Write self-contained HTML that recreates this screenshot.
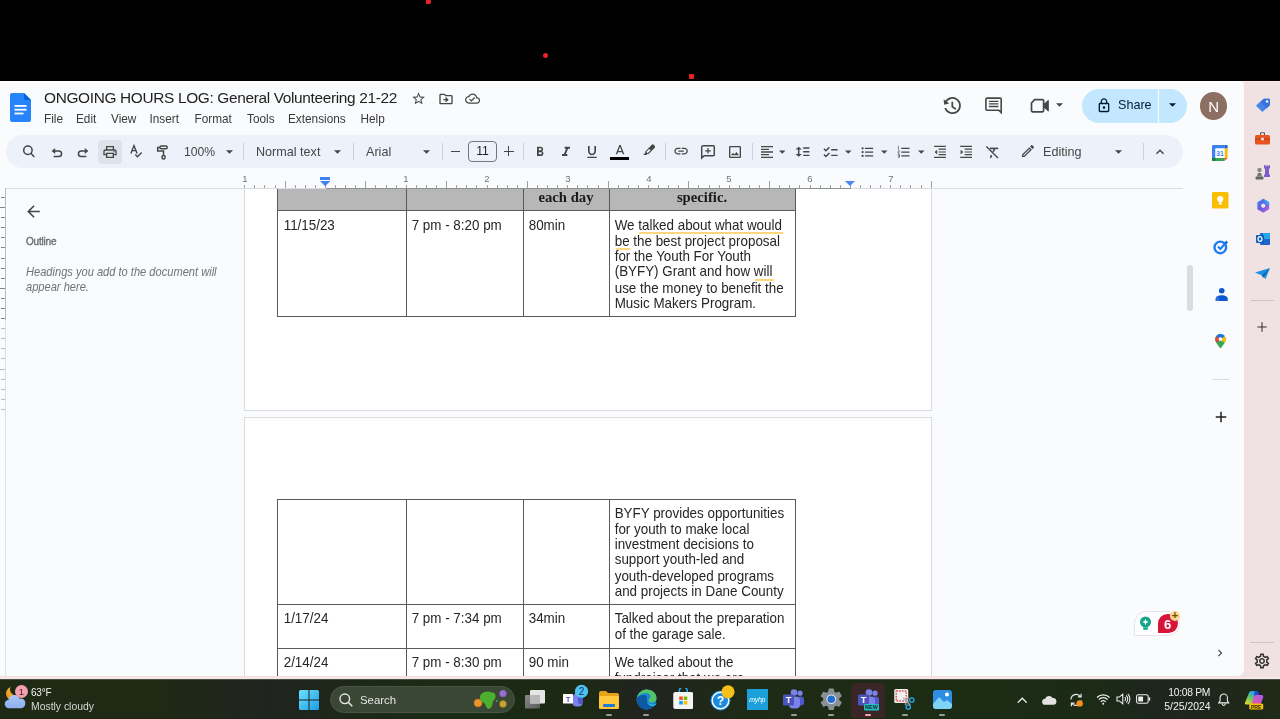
<!DOCTYPE html>
<html><head><meta charset="utf-8">
<style>
*{margin:0;padding:0;box-sizing:border-box}
html,body{width:1280px;height:719px;overflow:hidden;background:#000;font-family:"Liberation Sans",sans-serif;position:relative}
.a{position:absolute}
svg.i{position:absolute;fill:#444746}
.t{position:absolute;white-space:nowrap;line-height:1}
.cell{position:absolute;white-space:nowrap;font-size:13.4px;line-height:14.136px;color:#262626;transform:scaleY(1.1);transform-origin:0 0}
.t{will-change:transform}
</style></head><body>
<!-- top black with red dots -->
<div class="a" style="left:426px;top:0;width:5px;height:4px;background:#ee2222;border-radius:0 1px 2px 1px"></div>
<div class="a" style="left:543px;top:53px;width:5px;height:5px;background:#ee2222;border-radius:50%"></div>
<div class="a" style="left:689px;top:74px;width:5px;height:5px;background:#ee2222;border-radius:1px"></div>

<!-- browser frame pink -->
<div class="a" style="left:0;top:81px;width:1280px;height:598px;background:#f0e2e2"></div>
<!-- docs app -->
<div id="app" class="a" style="left:0;top:81px;width:1244px;height:595px;background:#f9fbfd;border-radius:0 3px 7px 0;overflow:hidden">
</div>

<!-- ===== HEADER ===== -->
<div class="a" style="left:0;top:81px;width:1241px;height:1px;background:#fff"></div><div class="a" style="left:1241px;top:81px;width:39px;height:1px;background:#fde9e9"></div><div class="a" style="left:0;top:677px;width:1280px;height:2px;background:#f8e6e6"></div><div class="a" style="left:0;top:679px;width:1280px;height:1px;background:#15240f"></div>
<!-- docs logo -->
<svg class="a" style="left:10px;top:93px" width="21" height="29" viewBox="0 0 21 29">
<path d="M2 0h12l7 7v20a2 2 0 0 1-2 2H2a2 2 0 0 1-2-2V2a2 2 0 0 1 2-2z" fill="#2684fc"/>
<path d="M14 0l7 7h-5.2a1.8 1.8 0 0 1-1.8-1.8z" fill="#0066da"/>
<rect x="4.5" y="12" width="12" height="1.8" fill="#fff"/>
<rect x="4.5" y="15.8" width="12" height="1.8" fill="#fff"/>
<rect x="4.5" y="19.6" width="9" height="1.8" fill="#fff"/>
</svg>
<div class="t" style="left:43.5px;top:90px;font-size:15.4px;color:#1f1f1f;letter-spacing:-0.33px">ONGOING HOURS LOG: General Volunteering 21-22</div>
<!-- star, move, cloud -->
<svg class="i" style="left:411px;top:90.7px" width="15.2" height="15.2" viewBox="0 0 24 24"><path d="M22 9.24l-7.19-.62L12 2 9.19 8.63 2 9.24l5.46 4.73L5.82 21 12 17.270 18.18 21l-1.63-7.03L22 9.24zM12 15.4l-3.760 2.27 1-4.28-3.32-2.88 4.38-.38L12 6.1l1.71 4.04 4.38.38-3.32 2.880 1 4.28L12 15.4z"/></svg>
<svg class="i" style="left:437.7px;top:91.1px" width="16" height="16" viewBox="0 0 24 24"><path d="M20 6h-8l-2-2H4c-1.1 0-1.99.9-1.99 2L2 18c0 1.1.9 2 2 2h16c1.1 0 2-.9 2-2V8c0-1.1-.9-2-2-2zm0 12H4V6h5.17l2 2H20v10zm-7.84-6H8v2h4.160l-1.59 1.59L11.99 17 16 13.01 11.99 9l-1.41 1.41L12.16 12z"/></svg>
<svg class="i" style="left:465.1px;top:91.3px" width="15.2" height="15.2" viewBox="0 0 24 24"><path d="M19.35 10.04C18.67 6.59 15.64 4 12 4 9.11 4 6.6 5.64 5.35 8.04 2.34 8.36 0 10.91 0 14c0 3.31 2.69 6 6 6h13c2.76 0 5-2.24 5-5 0-2.640-2.05-4.78-4.65-4.96zM19 18H6c-2.21 0-4-1.79-4-4 0-2.05 1.53-3.76 3.56-3.97l1.07-.11.5-.95C8.08 7.14 9.94 6 12 6c2.62 0 4.88 1.86 5.39 4.43l.3 1.5 1.53.11c1.56.1 2.78 1.41 2.78 2.96 0 1.65-1.35 3-3 3zm-9-3.82l-2.09-2.09L6.5 13.5 10 17l6.01-6.01-1.41-1.41z"/></svg>
<!-- menu -->
<div class="t" style="top:112.8px;font-size:11.8px;color:#3a3a3a;transform:scaleY(1.1);transform-origin:0 0">
<span class="a" style="left:44px">File</span><span class="a" style="left:76px">Edit</span><span class="a" style="left:111px">View</span><span class="a" style="left:149.5px">Insert</span><span class="a" style="left:194.5px">Format</span><span class="a" style="left:247px">Tools</span><span class="a" style="left:288px">Extensions</span><span class="a" style="left:360.5px">Help</span>
</div>
<!-- right header -->
<svg class="a" style="left:940px;top:94.7px" width="24" height="22" viewBox="940 94 24 22" fill="none" stroke="#444746" stroke-width="1.7">
<path d="M945.6 101.2A7.6 7.6 0 1 1 945.2 107"/>
<path d="M952.3 100.8V105.6L955.8 108.2"/>
<path d="M943.6 98.3L944.2 103.8 949.2 102.4z" fill="#444746" stroke="none"/>
</svg>
<svg class="a" style="left:984px;top:96px" width="20" height="19" viewBox="984 96 20 19" fill="none" stroke="#444746" stroke-width="1.6">
<path d="M987.1 98.1H1000a1.2 1.2 0 0 1 1.2 1.2V112.6L998.8 110.2H987.1a1.2 1.2 0 0 1-1.2-1.2V99.3a1.2 1.2 0 0 1 1.2-1.2z"/>
<path d="M988.9 101.3H998.4M988.9 103.9H998.4M988.9 106.5H998.4" stroke-width="1.3"/>
</svg>
<svg class="a" style="left:1029px;top:97px" width="22" height="17" viewBox="1029 97 22 17" fill="none" stroke="#444746" stroke-width="1.7">
<path d="M1034.6 99.7H1042.4a1.2 1.2 0 0 1 1.2 1.2V110.6a1.2 1.2 0 0 1-1.2 1.2H1032.7a1.2 1.2 0 0 1-1.2-1.2V103z"/>
<path d="M1043.6 104.6L1048.3 100.4V111L1043.6 106.8z" fill="#444746" stroke-width="1"/>
</svg>
<svg class="i" style="left:1056px;top:103.3px" width="7" height="4" viewBox="0 0 10 5"><path d="M0 0l5 5 5-5z"/></svg>
<!-- share -->
<div class="a" style="left:1082px;top:89px;width:104.5px;height:33.5px;background:#c2e7ff;border-radius:17px"></div>
<div class="a" style="left:1158px;top:89px;width:1px;height:33.5px;background:#f9fbfd"></div>
<svg class="a" style="left:1095.5px;top:97px" width="16" height="17" viewBox="0 0 24 24" fill="#001d35"><path d="M18 8h-1V6c0-2.76-2.24-5-5-5S7 3.24 7 6v2H6c-1.1 0-2 .9-2 2v10c0 1.1.9 2 2 2h12c1.1 0 2-.9 2-2V10c0-1.1-.9-2-2-2zM9 6c0-1.66 1.34-3 3-3s3 1.34 3 3v2H9V6zm9 14H6V10h12v10zm-6-3c1.1 0 2-.9 2-2s-.9-2-2-2-2 .9-2 2 .9 2 2 2z"/></svg>
<div class="t" style="left:1118px;top:99px;font-size:12.6px;color:#001d35">Share</div>
<svg class="a" style="left:1168.5px;top:103px" width="7" height="4" viewBox="0 0 10 5" fill="#001d35"><path d="M0 0l5 5 5-5z"/></svg>
<!-- avatar -->
<div class="a" style="left:1199.5px;top:92px;width:27.5px;height:27.5px;border-radius:50%;background:#8d6e63"></div>
<div class="t" style="left:1199.5px;width:27.5px;text-align:center;top:99px;font-size:15px;color:#fff">N</div>
<!-- ===== TOOLBAR ===== -->
<div class="a" style="left:5.5px;top:134.5px;width:1177.5px;height:33.5px;background:#edf2fa;border-radius:17px"></div>
<div class="a" style="left:98px;top:139.5px;width:24px;height:24.5px;background:#dde3ea;border-radius:4px"></div>
<!-- search -->
<svg class="a" style="left:20px;top:142px" width="17" height="17" viewBox="20 142 17 17" fill="none" stroke="#444746" stroke-width="1.5"><circle cx="27.9" cy="150.2" r="4.2"/><path d="M30.9 153.3L34.3 156.9"/></svg>
<!-- undo -->
<svg class="a" style="left:51.2px;top:147px" width="12" height="11" viewBox="0 0 12 11"><path d="M3.5 4H7.8a2.75 2.75 0 0 1 0 5.5H2.6" stroke="#444746" stroke-width="1.5" fill="none"/><path d="M0.6 4L4.2 0.9V7.1z" fill="#444746"/></svg>
<!-- redo -->
<svg class="a" style="left:77px;top:147px;transform:scaleX(-1)" width="12" height="11" viewBox="0 0 12 11"><path d="M3.5 4H7.8a2.75 2.75 0 0 1 0 5.5H2.6" stroke="#444746" stroke-width="1.5" fill="none"/><path d="M0.6 4L4.2 0.9V7.1z" fill="#444746"/></svg>
<!-- print -->
<svg class="i" style="left:101.5px;top:144px" width="16" height="16" viewBox="0 0 24 24"><path d="M19 8h-1V3H6v5H5c-1.66 0-3 1.34-3 3v6h4v4h12v-4h4v-6c0-1.66-1.34-3-3-3zM8 5h8v3H8V5zm8 12v2H8v-4h8v2zm2-2v-2H6v2H4v-4c0-.55.45-1 1-1h14c.55 0 1 .45 1 1v4h-2z"/><circle cx="18" cy="11.5" r="1"/></svg>
<!-- spellcheck -->
<svg class="a" style="left:128px;top:143px" width="16" height="16" viewBox="128 143 16 16" fill="none" stroke="#444746" stroke-width="1.4"><path d="M130.9 153.5L134 145.6 137.1 153.5M132.2 150.6H135.8M135.3 154.6L137.4 156.7 141.7 152.4"/></svg>
<!-- paint format -->
<svg class="a" style="left:155px;top:144px" width="15" height="17" viewBox="155 144 15 17" fill="none" stroke="#444746" stroke-width="1.5"><rect x="159.9" y="146.1" width="7.3" height="2.7" rx="1.3"/><path d="M159.6 147.4H157.7V150.9H163.5V155.2"/><rect x="162" y="155.5" width="3.1" height="3.6" rx="1.5"/></svg>
<div class="t" style="left:183.5px;top:146px;font-size:12.2px;color:#444746">100%</div>
<svg class="i" style="left:225.5px;top:150px" width="7" height="4" viewBox="0 0 10 5"><path d="M0 0l5 5 5-5z"/></svg>
<div class="a" style="left:243px;top:143px;width:1px;height:17px;background:#cdd1d6"></div>
<div class="t" style="left:256px;top:146px;font-size:12.6px;color:#444746">Normal text</div>
<svg class="i" style="left:333.5px;top:150px" width="7" height="4" viewBox="0 0 10 5"><path d="M0 0l5 5 5-5z"/></svg>
<div class="a" style="left:352.5px;top:143px;width:1px;height:17px;background:#cdd1d6"></div>
<div class="t" style="left:366px;top:146px;font-size:12.6px;color:#444746">Arial</div>
<svg class="i" style="left:422.5px;top:150px" width="7" height="4" viewBox="0 0 10 5"><path d="M0 0l5 5 5-5z"/></svg>
<div class="a" style="left:441.5px;top:143px;width:1px;height:17px;background:#cdd1d6"></div>
<div class="a" style="left:450.5px;top:150.7px;width:9px;height:1.4px;background:#444746"></div>
<div class="a" style="left:468px;top:141px;width:29px;height:21px;border:1px solid #747775;border-radius:4px"></div>
<div class="t" style="left:468px;width:29px;text-align:center;top:145.4px;font-size:12.2px;color:#1f1f1f">11</div>
<div class="a" style="left:504px;top:150.7px;width:9.5px;height:1.4px;background:#444746"></div>
<div class="a" style="left:508px;top:146.3px;width:1.4px;height:9.6px;background:#444746"></div>
<div class="a" style="left:523px;top:143px;width:1px;height:17px;background:#cdd1d6"></div>
<!-- B I U A -->
<svg class="i" style="left:532px;top:144px;transform:scaleX(0.9)" width="16" height="16" viewBox="0 0 24 24"><path d="M15.6 10.79c.97-.67 1.65-1.77 1.65-2.79 0-2.26-1.75-4-4-4H7v14h7.04c2.09 0 3.71-1.7 3.71-3.79 0-1.52-.86-2.82-2.15-3.42zM10 6.5h3c.83 0 1.5.67 1.5 1.5s-.67 1.5-1.5 1.5h-3v-3zm3.5 9H10v-3h3.5c.83 0 1.5.67 1.5 1.5s-.67 1.5-1.5 1.5z"/></svg>
<svg class="i" style="left:557.5px;top:143.6px" width="16" height="16" viewBox="0 0 24 24"><path d="M10 4v3h2.21l-3.42 8H6v3h8v-3h-2.21l3.42-8H18V4z"/></svg>
<svg class="i" style="left:584px;top:144px" width="16" height="16" viewBox="0 0 24 24"><path d="M12 17c3.31 0 6-2.69 6-6V3h-2.5v8c0 1.93-1.57 3.5-3.5 3.5S8.5 12.93 8.5 11V3H6v8c0 3.31 2.69 6 6 6zm-7 2v2h14v-2H5z"/></svg>
<svg class="i" style="left:611.5px;top:142.5px" width="16" height="16" viewBox="0 0 24 24"><path d="M11 3L5.500 17h2.25l1.12-3h6.25l1.12 3h2.25L13 3h-2zm-1.38 9L12 5.67 14.380 12H9.62z"/></svg>
<div class="a" style="left:610px;top:156.5px;width:19px;height:3px;background:#000"></div>
<!-- highlighter -->
<svg class="a" style="left:642.5px;top:143.5px" width="12.5" height="11" viewBox="0 0 12.5 11">
<path d="M9 0.5a1 1 0 0 1 1.4 0l1.6 1.6a1 1 0 0 1 0 1.4L5.6 9.9H4.4L3.3 11H0.2L2.3 8.8V7.6z" fill="#444746"/>
<path d="M6.2 4.9L7.6 6.3 4.7 9.2 3.3 7.8z" fill="#edf2fa"/>
</svg>
<div class="a" style="left:665px;top:143px;width:1px;height:17px;background:#cdd1d6"></div>
<svg class="i" style="left:673.2px;top:142.8px" width="16.2" height="16.2" viewBox="0 0 24 24"><path d="M3.9 12c0-1.71 1.39-3.1 3.1-3.1h4V7H7c-2.76 0-5 2.24-5 5s2.24 5 5 5h4v-1.9H7c-1.71 0-3.1-1.39-3.1-3.1zM8 13h8v-2H8v2zm9-6h-4v1.9h4c1.71 0 3.1 1.39 3.1 3.1s-1.39 3.1-3.1 3.1h-4V17h4c2.76 0 5-2.24 5-5s-2.24-5-5-5z"/></svg>
<svg class="a" style="left:699px;top:143px" width="18" height="18" viewBox="699 143 18 18" fill="none" stroke="#444746" stroke-width="1.45"><path d="M702.6 145.7H713.3a1 1 0 0 1 1 1V154.8a1 1 0 0 1-1 1H704.1L701.7 158V146.7a1 1 0 0 1 1-1z"/><path d="M708 148.1V153.6M705.2 150.85H710.8" stroke-width="1.25"/></svg>
<svg class="i" style="left:726.5px;top:143.6px" width="16" height="16" viewBox="0 0 24 24"><path d="M19 5v14H5V5h14m0-2H5c-1.1 0-2 .9-2 2v14c0 1.1.9 2 2 2h14c1.1 0 2-.9 2-2V5c0-1.1-.9-2-2-2zm-4.86 8.86l-3 3.87L9 13.140 6 17h12l-3.86-5.14z"/></svg>
<div class="a" style="left:752px;top:143px;width:1px;height:17px;background:#cdd1d6"></div>
<svg class="i" style="left:758.5px;top:144px" width="16" height="16" viewBox="0 0 24 24"><path d="M15 15H3v2h12v-2zm0-8H3v2h12V7zM3 13h18v-2H3v2zm0 8h18v-2H3v2zM3 3v2h18V3H3z"/></svg>
<svg class="i" style="left:778.5px;top:150px" width="6.5" height="4" viewBox="0 0 10 5"><path d="M0 0l5 5 5-5z"/></svg>
<svg class="a" style="left:794px;top:145px" width="17" height="13" viewBox="794 145 17 13"><path d="M795.5 149.6L798.7 146.8 801.9 149.6zM795.5 153.9L798.7 156.7 801.9 153.9z" fill="#444746"/><path d="M798.7 149V154.5" stroke="#444746" stroke-width="1.5"/><path d="M803.2 148H809.4M803.2 151.7H809.4M803.2 155.4H809.4" stroke="#444746" stroke-width="1.4"/></svg>
<svg class="i" style="left:822px;top:144px" width="17" height="17" viewBox="0 0 24 24"><path d="M22 7h-9v2h9V7zm0 8h-9v2h9v-2zM5.54 11L2 7.460l1.41-1.41 2.12 2.12 4.24-4.24 1.41 1.41L5.54 11zm0 8L2 15.46l1.41-1.41 2.12 2.12 4.24-4.24 1.41 1.41L5.54 19z"/></svg>
<svg class="i" style="left:845px;top:150px" width="6.5" height="4" viewBox="0 0 10 5"><path d="M0 0l5 5 5-5z"/></svg>
<svg class="a" style="left:859px;top:144px" width="16" height="16" viewBox="859 144 16 16"><g fill="#444746"><circle cx="862.6" cy="148.3" r="1.15"/><circle cx="862.6" cy="152.1" r="1.15"/><circle cx="862.6" cy="155.9" r="1.15"/></g><path d="M865 148.3H873.2M865 152.1H873.2M865 155.9H873.2" stroke="#444746" stroke-width="1.3"/></svg>
<svg class="i" style="left:881px;top:150px" width="6.5" height="4" viewBox="0 0 10 5"><path d="M0 0l5 5 5-5z"/></svg>
<svg class="a" style="left:896px;top:144px" width="16" height="16" viewBox="896 144 16 16"><path d="M901.3 148.3H909.5M901.3 152.1H909.5M901.3 155.9H909.5" stroke="#444746" stroke-width="1.3"/><path d="M898.4 146.2V149.6M897.8 150.9H899.5L897.8 153.1H899.6M897.8 154.6H899.5V157.2H897.8M897.9 155.9H899.4" stroke="#444746" stroke-width="0.7" fill="none"/></svg>
<svg class="i" style="left:918px;top:150px" width="6.5" height="4" viewBox="0 0 10 5"><path d="M0 0l5 5 5-5z"/></svg>
<svg class="a" style="left:932px;top:144px" width="16" height="16" viewBox="932 144 16 16"><path d="M934.1 146.4H945.9M938.6 149.2H945.9M938.6 152H945.9M938.6 154.7H945.9M934.1 157.4H945.9" stroke="#444746" stroke-width="1.2"/><path d="M937.2 149.8V154.4L934.6 152.1z" fill="#444746"/></svg>
<svg class="a" style="left:958px;top:144px" width="16" height="16" viewBox="958 144 16 16"><path d="M960.2 146.4H972M964.7 149.2H972M964.7 152H972M964.7 154.7H972M960.2 157.4H972" stroke="#444746" stroke-width="1.2"/><path d="M960.6 149.8V154.4L963.2 152.1z" fill="#444746"/></svg>
<svg class="a" style="left:984px;top:144px" width="16" height="16" viewBox="984 144 16 16"><path d="M986.4 146.6L998 157.9" stroke="#444746" stroke-width="1.4"/><path d="M990 148.4H998.2" stroke="#444746" stroke-width="1.6"/><path d="M994.6 148.6L993.2 151.9M991.6 155.1L990.4 157.9" stroke="#444746" stroke-width="1.6"/></svg>
<svg class="i" style="left:1020px;top:143px" width="16" height="16" viewBox="0 0 24 24"><path d="M3 17.25V21h3.75L17.81 9.94l-3.75-3.75L3 17.25zM5.92 19H5v-.92l9.06-9.06.92.92L5.92 19zM20.71 5.63l-2.34-2.34c-.2-.2-.45-.29-.71-.29s-.51.1-.7.29l-1.83 1.83 3.75 3.75 1.83-1.83c.39-.39.39-1.02 0-1.41z"/></svg>
<div class="t" style="left:1043px;top:146px;font-size:12.6px;color:#444746">Editing</div>
<svg class="i" style="left:1115px;top:150px" width="7" height="4" viewBox="0 0 10 5"><path d="M0 0l5 5 5-5z"/></svg>
<div class="a" style="left:1143px;top:143px;width:1px;height:17px;background:#cdd1d6"></div>
<svg class="i" style="left:1152px;top:144px" width="16" height="16" viewBox="0 0 24 24"><path d="M12 8l-6 6 1.41 1.41L12 10.83l4.59 4.58L18 14z"/></svg>
<!-- ===== RULER ===== -->
<div class="a" style="left:244.25px;top:184.5px;width:1px;height:3.5px;background:#9aa0a6"></div>
<div class="a" style="left:254.34px;top:184.5px;width:1px;height:3.5px;background:#9aa0a6"></div>
<div class="a" style="left:264.44px;top:184.5px;width:1px;height:3.5px;background:#9aa0a6"></div>
<div class="a" style="left:274.53px;top:184.5px;width:1px;height:3.5px;background:#9aa0a6"></div>
<div class="a" style="left:284.62px;top:181px;width:1px;height:7px;background:#9aa0a6"></div>
<div class="a" style="left:294.72px;top:184.5px;width:1px;height:3.5px;background:#9aa0a6"></div>
<div class="a" style="left:304.81px;top:184.5px;width:1px;height:3.5px;background:#9aa0a6"></div>
<div class="a" style="left:314.91px;top:184.5px;width:1px;height:3.5px;background:#9aa0a6"></div>
<div class="a" style="left:325.00px;top:184.5px;width:1px;height:3.5px;background:#9aa0a6"></div>
<div class="a" style="left:335.09px;top:184.5px;width:1px;height:3.5px;background:#9aa0a6"></div>
<div class="a" style="left:345.19px;top:184.5px;width:1px;height:3.5px;background:#9aa0a6"></div>
<div class="a" style="left:355.28px;top:184.5px;width:1px;height:3.5px;background:#9aa0a6"></div>
<div class="a" style="left:365.38px;top:181px;width:1px;height:7px;background:#9aa0a6"></div>
<div class="a" style="left:375.47px;top:184.5px;width:1px;height:3.5px;background:#9aa0a6"></div>
<div class="a" style="left:385.56px;top:184.5px;width:1px;height:3.5px;background:#9aa0a6"></div>
<div class="a" style="left:395.66px;top:184.5px;width:1px;height:3.5px;background:#9aa0a6"></div>
<div class="a" style="left:405.75px;top:184.5px;width:1px;height:3.5px;background:#9aa0a6"></div>
<div class="a" style="left:415.84px;top:184.5px;width:1px;height:3.5px;background:#9aa0a6"></div>
<div class="a" style="left:425.94px;top:184.5px;width:1px;height:3.5px;background:#9aa0a6"></div>
<div class="a" style="left:436.03px;top:184.5px;width:1px;height:3.5px;background:#9aa0a6"></div>
<div class="a" style="left:446.12px;top:181px;width:1px;height:7px;background:#9aa0a6"></div>
<div class="a" style="left:456.22px;top:184.5px;width:1px;height:3.5px;background:#9aa0a6"></div>
<div class="a" style="left:466.31px;top:184.5px;width:1px;height:3.5px;background:#9aa0a6"></div>
<div class="a" style="left:476.41px;top:184.5px;width:1px;height:3.5px;background:#9aa0a6"></div>
<div class="a" style="left:486.50px;top:184.5px;width:1px;height:3.5px;background:#9aa0a6"></div>
<div class="a" style="left:496.59px;top:184.5px;width:1px;height:3.5px;background:#9aa0a6"></div>
<div class="a" style="left:506.69px;top:184.5px;width:1px;height:3.5px;background:#9aa0a6"></div>
<div class="a" style="left:516.78px;top:184.5px;width:1px;height:3.5px;background:#9aa0a6"></div>
<div class="a" style="left:526.88px;top:181px;width:1px;height:7px;background:#9aa0a6"></div>
<div class="a" style="left:536.97px;top:184.5px;width:1px;height:3.5px;background:#9aa0a6"></div>
<div class="a" style="left:547.06px;top:184.5px;width:1px;height:3.5px;background:#9aa0a6"></div>
<div class="a" style="left:557.16px;top:184.5px;width:1px;height:3.5px;background:#9aa0a6"></div>
<div class="a" style="left:567.25px;top:184.5px;width:1px;height:3.5px;background:#9aa0a6"></div>
<div class="a" style="left:577.34px;top:184.5px;width:1px;height:3.5px;background:#9aa0a6"></div>
<div class="a" style="left:587.44px;top:184.5px;width:1px;height:3.5px;background:#9aa0a6"></div>
<div class="a" style="left:597.53px;top:184.5px;width:1px;height:3.5px;background:#9aa0a6"></div>
<div class="a" style="left:607.62px;top:181px;width:1px;height:7px;background:#9aa0a6"></div>
<div class="a" style="left:617.72px;top:184.5px;width:1px;height:3.5px;background:#9aa0a6"></div>
<div class="a" style="left:627.81px;top:184.5px;width:1px;height:3.5px;background:#9aa0a6"></div>
<div class="a" style="left:637.91px;top:184.5px;width:1px;height:3.5px;background:#9aa0a6"></div>
<div class="a" style="left:648.00px;top:184.5px;width:1px;height:3.5px;background:#9aa0a6"></div>
<div class="a" style="left:658.09px;top:184.5px;width:1px;height:3.5px;background:#9aa0a6"></div>
<div class="a" style="left:668.19px;top:184.5px;width:1px;height:3.5px;background:#9aa0a6"></div>
<div class="a" style="left:678.28px;top:184.5px;width:1px;height:3.5px;background:#9aa0a6"></div>
<div class="a" style="left:688.38px;top:181px;width:1px;height:7px;background:#9aa0a6"></div>
<div class="a" style="left:698.47px;top:184.5px;width:1px;height:3.5px;background:#9aa0a6"></div>
<div class="a" style="left:708.56px;top:184.5px;width:1px;height:3.5px;background:#9aa0a6"></div>
<div class="a" style="left:718.66px;top:184.5px;width:1px;height:3.5px;background:#9aa0a6"></div>
<div class="a" style="left:728.75px;top:184.5px;width:1px;height:3.5px;background:#9aa0a6"></div>
<div class="a" style="left:738.84px;top:184.5px;width:1px;height:3.5px;background:#9aa0a6"></div>
<div class="a" style="left:748.94px;top:184.5px;width:1px;height:3.5px;background:#9aa0a6"></div>
<div class="a" style="left:759.03px;top:184.5px;width:1px;height:3.5px;background:#9aa0a6"></div>
<div class="a" style="left:769.12px;top:181px;width:1px;height:7px;background:#9aa0a6"></div>
<div class="a" style="left:779.22px;top:184.5px;width:1px;height:3.5px;background:#9aa0a6"></div>
<div class="a" style="left:789.31px;top:184.5px;width:1px;height:3.5px;background:#9aa0a6"></div>
<div class="a" style="left:799.41px;top:184.5px;width:1px;height:3.5px;background:#9aa0a6"></div>
<div class="a" style="left:809.50px;top:184.5px;width:1px;height:3.5px;background:#9aa0a6"></div>
<div class="a" style="left:819.59px;top:184.5px;width:1px;height:3.5px;background:#9aa0a6"></div>
<div class="a" style="left:829.69px;top:184.5px;width:1px;height:3.5px;background:#9aa0a6"></div>
<div class="a" style="left:839.78px;top:184.5px;width:1px;height:3.5px;background:#9aa0a6"></div>
<div class="a" style="left:849.88px;top:181px;width:1px;height:7px;background:#9aa0a6"></div>
<div class="a" style="left:859.97px;top:184.5px;width:1px;height:3.5px;background:#9aa0a6"></div>
<div class="a" style="left:870.06px;top:184.5px;width:1px;height:3.5px;background:#9aa0a6"></div>
<div class="a" style="left:880.16px;top:184.5px;width:1px;height:3.5px;background:#9aa0a6"></div>
<div class="a" style="left:890.25px;top:184.5px;width:1px;height:3.5px;background:#9aa0a6"></div>
<div class="a" style="left:900.34px;top:184.5px;width:1px;height:3.5px;background:#9aa0a6"></div>
<div class="a" style="left:910.44px;top:184.5px;width:1px;height:3.5px;background:#9aa0a6"></div>
<div class="a" style="left:920.53px;top:184.5px;width:1px;height:3.5px;background:#9aa0a6"></div>
<div class="a" style="left:930.62px;top:181px;width:1px;height:7px;background:#9aa0a6"></div>
<div class="t" style="left:234.75px;width:20px;text-align:center;top:174.3px;font-size:9.5px;color:#6f7479">1</div>
<div class="t" style="left:396.25px;width:20px;text-align:center;top:174.3px;font-size:9.5px;color:#6f7479">1</div>
<div class="t" style="left:477.00px;width:20px;text-align:center;top:174.3px;font-size:9.5px;color:#6f7479">2</div>
<div class="t" style="left:557.75px;width:20px;text-align:center;top:174.3px;font-size:9.5px;color:#6f7479">3</div>
<div class="t" style="left:638.50px;width:20px;text-align:center;top:174.3px;font-size:9.5px;color:#6f7479">4</div>
<div class="t" style="left:719.25px;width:20px;text-align:center;top:174.3px;font-size:9.5px;color:#6f7479">5</div>
<div class="t" style="left:800.00px;width:20px;text-align:center;top:174.3px;font-size:9.5px;color:#6f7479">6</div>
<div class="t" style="left:880.75px;width:20px;text-align:center;top:174.3px;font-size:9.5px;color:#6f7479">7</div>
<div class="a" style="left:5px;top:188px;width:1178px;height:1px;background:#dadce0"></div>
<!-- blue left indent marker -->
<div class="a" style="left:325.5px;top:188px;width:525px;height:1px;background:#8f9393"></div>
<div class="a" style="left:320.2px;top:177px;width:10.3px;height:3px;background:#3f82f0"></div>
<svg class="a" style="left:320.2px;top:180.8px" width="10.3" height="5.2" viewBox="0 0 10 5"><path d="M0 0h10L5 5z" fill="#3f82f0"/></svg>
<svg class="a" style="left:844.9px;top:181px" width="10" height="5" viewBox="0 0 10 5"><path d="M0 0h10L5 5z" fill="#4a86f0"/></svg>

<!-- ===== DOC SCROLL AREA ===== -->
<div class="a" style="left:0;top:189px;width:1183px;height:487px;overflow:hidden">
  <!-- page 1 -->
  <div class="a" style="left:244px;top:-200px;width:688px;height:422px;background:#fff;border:1px solid #dadce0"></div>
  <!-- page 2 -->
  <div class="a" style="left:244px;top:228px;width:688px;height:600px;background:#fff;border:1px solid #dadce0"></div>
  <!-- table 1 -->
  <div class="a" style="left:277px;top:-10px;width:519px;height:32px;background:#b7b7b7"></div>
  <div class="a" style="left:277px;top:-10px;width:1px;height:138px;background:#5a5a5a"></div>
  <div class="a" style="left:406px;top:-10px;width:1px;height:138px;background:#5a5a5a"></div>
  <div class="a" style="left:523px;top:-10px;width:1px;height:138px;background:#5a5a5a"></div>
  <div class="a" style="left:609px;top:-10px;width:1px;height:138px;background:#5a5a5a"></div>
  <div class="a" style="left:795px;top:-10px;width:1px;height:138px;background:#5a5a5a"></div>
  <div class="a" style="left:277px;top:21px;width:519px;height:1px;background:#5a5a5a"></div>
  <div class="a" style="left:277px;top:127px;width:519px;height:1px;background:#5a5a5a"></div>
  <div class="t" style="left:523px;width:86px;text-align:center;top:1px;font-size:14.7px;font-family:'Liberation Serif',serif;font-weight:bold;color:#1a1a1a">each day</div>
  <div class="t" style="left:609px;width:186px;text-align:center;top:1px;font-size:14.7px;font-family:'Liberation Serif',serif;font-weight:bold;color:#1a1a1a">specific.</div>
  <div class="cell" style="left:283.7px;top:29px">11/15/23</div>
  <div class="cell" style="left:411.7px;top:29px">7 pm - 8:20 pm</div>
  <div class="cell" style="left:528.7px;top:29px">80min</div>
  <div class="cell" style="left:614.7px;top:29px">We talked about what would<br>be the best project proposal<br>for the Youth For Youth<br>(BYFY) Grant and how will<br>use the money to benefit the<br>Music Makers Program.</div>
  <!-- yellow underlines -->
  <div class="a" style="left:638.5px;top:43px;width:144.5px;height:2px;background:#fdd87a"></div>
  <div class="a" style="left:615.5px;top:58.5px;width:14.5px;height:2px;background:#fdd87a"></div>
  <div class="a" style="left:755px;top:89.5px;width:19px;height:2px;background:#fdd87a"></div>

  <!-- table 2 -->
  <div class="a" style="left:277px;top:309.5px;width:519px;height:1px;background:#5a5a5a"></div>
  <div class="a" style="left:277px;top:415px;width:519px;height:1px;background:#5a5a5a"></div>
  <div class="a" style="left:277px;top:459px;width:519px;height:1px;background:#5a5a5a"></div>
  <div class="a" style="left:277px;top:309.5px;width:1px;height:300px;background:#5a5a5a"></div>
  <div class="a" style="left:406px;top:309.5px;width:1px;height:300px;background:#5a5a5a"></div>
  <div class="a" style="left:523px;top:309.5px;width:1px;height:300px;background:#5a5a5a"></div>
  <div class="a" style="left:609px;top:309.5px;width:1px;height:300px;background:#5a5a5a"></div>
  <div class="a" style="left:795px;top:309.5px;width:1px;height:300px;background:#5a5a5a"></div>
  <div class="cell" style="left:614.7px;top:317px">BYFY provides opportunities<br>for youth to make local<br>investment decisions to<br>support youth-led and<br>youth-developed programs<br>and projects in Dane County</div>
  <div class="cell" style="left:283.7px;top:421.5px">1/17/24</div>
  <div class="cell" style="left:411.7px;top:421.5px">7 pm - 7:34 pm</div>
  <div class="cell" style="left:528.7px;top:421.5px">34min</div>
  <div class="cell" style="left:614.7px;top:421.5px">Talked about the preparation<br>of the garage sale.</div>
  <div class="cell" style="left:283.7px;top:465.5px">2/14/24</div>
  <div class="cell" style="left:411.7px;top:465.5px">7 pm - 8:30 pm</div>
  <div class="cell" style="left:528.7px;top:465.5px">90 min</div>
  <div class="cell" style="left:614.7px;top:465.5px">We talked about the<br>fundraiser that we are</div>

  <!-- outline sidebar -->
  <div class="a" style="left:5px;top:-1px;width:239px;height:500px;background:#f9fbfd;border-top:1px solid #dadce0"></div>
</div>
<div class="a" style="left:1.3px;top:197.00px;width:3.7px;height:1px;background:#80868b"></div>
<div class="a" style="left:0px;top:207.09px;width:5px;height:1px;background:#80868b"></div>
<div class="a" style="left:1.3px;top:217.18px;width:3.7px;height:1px;background:#80868b"></div>
<div class="a" style="left:1.3px;top:227.27px;width:3.7px;height:1px;background:#80868b"></div>
<div class="a" style="left:1.3px;top:237.36px;width:3.7px;height:1px;background:#80868b"></div>
<div class="a" style="left:1.3px;top:247.45px;width:3.7px;height:1px;background:#80868b"></div>
<div class="a" style="left:1.3px;top:257.54px;width:3.7px;height:1px;background:#80868b"></div>
<div class="a" style="left:1.3px;top:267.63px;width:3.7px;height:1px;background:#80868b"></div>
<div class="a" style="left:1.3px;top:277.72px;width:3.7px;height:1px;background:#80868b"></div>
<div class="a" style="left:0px;top:287.81px;width:5px;height:1px;background:#80868b"></div>
<div class="a" style="left:1.3px;top:297.90px;width:3.7px;height:1px;background:#80868b"></div>
<div class="a" style="left:1.3px;top:307.99px;width:3.7px;height:1px;background:#80868b"></div>
<div class="a" style="left:1.3px;top:318.08px;width:3.7px;height:1px;background:#80868b"></div>
<div class="a" style="left:1.3px;top:328.17px;width:3.7px;height:1px;background:#b8bcc0"></div>
<div class="a" style="left:1.3px;top:338.26px;width:3.7px;height:1px;background:#b8bcc0"></div>
<div class="a" style="left:1.3px;top:348.35px;width:3.7px;height:1px;background:#b8bcc0"></div>
<div class="a" style="left:1.3px;top:358.44px;width:3.7px;height:1px;background:#b8bcc0"></div>
<div class="a" style="left:0px;top:368.53px;width:5px;height:1px;background:#b8bcc0"></div>
<div class="a" style="left:1.3px;top:378.62px;width:3.7px;height:1px;background:#b8bcc0"></div>
<div class="a" style="left:1.3px;top:388.71px;width:3.7px;height:1px;background:#b8bcc0"></div>
<div class="a" style="left:1.3px;top:398.80px;width:3.7px;height:1px;background:#b8bcc0"></div>
<div class="a" style="left:1.3px;top:408.89px;width:3.7px;height:1px;background:#b8bcc0"></div>
<div class="a" style="left:5px;top:188px;width:1px;height:132px;background:#b9bdc1"></div><div class="a" style="left:5px;top:320px;width:1px;height:356px;background:#dfe1e5"></div>
<svg class="a" style="left:24px;top:202px" width="19" height="19" viewBox="0 0 24 24" fill="#444746"><path d="M20 11H7.83l5.59-5.59L12 4l-8 8 8 8 1.41-1.41L7.83 13H20v-2z"/></svg>
<div class="t" style="left:25.5px;top:236.5px;font-size:10px;-webkit-text-stroke:0.35px #6a6e72;color:#6a6e72;letter-spacing:-0.2px">Outline</div>
<div class="t" style="left:25.5px;top:264.7px;font-size:11.1px;font-style:italic;color:#6f7377;line-height:12.5px;transform:scaleY(1.12);transform-origin:0 0">Headings you add to the document will<br>appear here.</div>
<!-- ===== RIGHT SIDE PANEL ===== -->
<!-- calendar -->
<svg class="a" style="left:1212.3px;top:145px" width="15.6" height="16" viewBox="0 0 15.6 16">
<path d="M1.2 0H12.5V3.5H3.5V12.9H0V1.2A1.2 1.2 0 0 1 1.2 0z" fill="#3b82f0"/>
<path d="M12.5 0h1.9a1.2 1.2 0 0 1 1.2 1.2V3.5H12.5z" fill="#1b5fd0"/>
<rect x="12.5" y="3.5" width="3.1" height="9.4" fill="#fbbc04"/>
<path d="M3.5 12.9H12.5V16H1.2A1.2 1.2 0 0 1 0 14.8V12.9z" fill="#34a853"/>
<path d="M0 12.9H3.5V16H1.2A1.2 1.2 0 0 1 0 14.8z" fill="#188038"/>
<path d="M12.5 12.9H15.6L12.5 16z" fill="#ea4335"/>
<rect x="3.5" y="3.5" width="9" height="9.4" fill="#fff"/>
<text x="8" y="11.3" font-size="6.8" text-anchor="middle" fill="#4285f4" font-family="Liberation Sans" font-weight="bold">31</text>
</svg>
<!-- keep -->
<svg class="a" style="left:1212px;top:192px" width="16.5" height="16.5" viewBox="0 0 16 16">
<rect width="16" height="16" rx="1.5" fill="#fbbc04"/>
<circle cx="8" cy="6.8" r="3" fill="#fff"/>
<rect x="6.6" y="10" width="2.8" height="2.2" fill="#fff"/>
</svg>
<!-- tasks -->
<svg class="a" style="left:1212px;top:239px" width="17" height="17" viewBox="1212 239 17 17">
<circle cx="1220.3" cy="247.4" r="5.8" fill="none" stroke="#1f7cf5" stroke-width="2.4"/>
<path d="M1217.9 246.6L1220.4 249 1224.6 244" fill="none" stroke="#1f7cf5" stroke-width="2.1"/>
<path d="M1226.2 240.6L1228 242.4 1226.2 244.2 1224.4 242.4z" fill="#1466d6"/>
</svg>
<!-- scroll thumb -->
<div class="a" style="left:1186.5px;top:265px;width:6.5px;height:46px;background:#dadce0;border-radius:4px"></div>
<!-- contacts -->
<svg class="a" style="left:1214.5px;top:287px" width="13.5" height="14.5" viewBox="0 0 14 14">
<circle cx="7" cy="3.3" r="2.9" fill="#0b57d0"/>
<path d="M0.8 14v-2.5C0.8 9.4 3.6 8 7 8s6.2 1.4 6.2 3.5V14z" fill="#0b57d0"/>
<path d="M0.8 14v-2.5C0.8 10 2 9 3.5 8.6L5 14z" fill="#2f6fe0"/>
</svg>
<!-- maps -->
<svg class="a" style="left:1215px;top:334px" width="11" height="14.5" viewBox="0 0 11 15">
<path d="M5.5 0A5.5 5.5 0 0 0 0 5.5C0 9 5.5 15 5.5 15S11 9 11 5.5A5.5 5.5 0 0 0 5.5 0z" fill="#34a853"/>
<path d="M5.5 0A5.5 5.5 0 0 0 1.2 2L5.5 6.3 9.8 2A5.5 5.5 0 0 0 5.5 0z" fill="#1a73e8"/>
<path d="M1.2 2A5.5 5.5 0 0 0 0 5.5c0 1 .4 2.2 1 3.3L5.5 6.3z" fill="#ea4335"/>
<path d="M9.8 2L5.5 6.3 10 9a7 7 0 0 0 1-3.5A5.5 5.5 0 0 0 9.8 2z" fill="#fbbc04"/>
<circle cx="5.5" cy="5.3" r="2" fill="#fff"/>
</svg>
<div class="a" style="left:1212px;top:379px;width:16.5px;height:1px;background:#dadce0"></div>
<svg class="a" style="left:1211.5px;top:407.5px" width="18" height="18" viewBox="0 0 24 24" fill="#1f1f1f"><path d="M19 13h-6v6h-2v-6H5v-2h6V5h2v6h6v2z"/></svg>
<!-- chevron -->
<svg class="a" style="left:1213px;top:645px" width="14" height="16" viewBox="0 0 24 24" fill="#444746"><path d="M10 6L8.59 7.41 13.17 12l-4.58 4.59L10 18l6-6z"/></svg>
<!-- badge pill -->
<div class="a" style="left:1133.5px;top:611px;width:46px;height:25px;background:#fff;border:1px solid #e3e3ea;border-radius:13px 13px 13px 0"></div>
<svg class="a" style="left:1139px;top:616px" width="13" height="15" viewBox="0 0 13 15">
<circle cx="6.5" cy="6" r="5.5" fill="#15a38a"/>
<rect x="4" y="11.5" width="5" height="2.3" rx="1" fill="#15a38a"/>
<path d="M6.5 2.8L7.4 5.1 9.7 6 7.4 6.9 6.5 9.2 5.6 6.9 3.3 6 5.6 5.1z" fill="#fff"/>
</svg>
<div class="a" style="left:1157.5px;top:614px;width:20px;height:19px;background:#d7153a;border-radius:10px 10px 10px 0"></div>
<div class="t" style="left:1157.5px;width:19px;text-align:center;top:617.5px;font-size:13px;font-weight:bold;color:#fff">6</div>
<div class="a" style="left:1170px;top:610.5px;width:10px;height:10px;background:#f7d58c;border-radius:50%"></div>
<div class="t" style="left:1170px;width:10px;text-align:center;top:610px;font-size:11px;font-weight:bold;color:#6b4a00">+</div>

<!-- ===== EDGE SIDEBAR (pink) ===== -->
<!-- tag -->
<svg class="a" style="left:1255.5px;top:97.5px" width="14.5" height="14" viewBox="0 0 15 14">
<path d="M8 0.5h5.5a1 1 0 0 1 1 1V7L7.5 13.5a1.2 1.2 0 0 1-1.7 0L0.8 8.5a1.2 1.2 0 0 1 0-1.7z" fill="#4a86e8"/>
<path d="M8 0.5h5.5a1 1 0 0 1 1 1V7L11 10.5 4.5 4z" fill="#3b73d9"/>
<circle cx="11.5" cy="3.5" r="1.3" fill="#fff"/>
</svg>
<!-- toolbox -->
<svg class="a" style="left:1255px;top:131.5px" width="15" height="13" viewBox="0 0 15 13">
<path d="M5 3V1.3A1 1 0 0 1 6 .3h3a1 1 0 0 1 1 1V3H9V1.3H6V3z" fill="#555"/>
<rect x="0" y="3" width="15" height="9.5" rx="1.5" fill="#e8531f"/>
<rect x="0" y="6.5" width="15" height="1" fill="#b93d14"/>
<rect x="6" y="5.8" width="3" height="2.5" rx=".5" fill="#ddd"/>
</svg>
<!-- chess -->
<svg class="a" style="left:1255px;top:163.5px" width="16" height="16" viewBox="0 0 16 16">
<path d="M9 1h1.2v1.2h1.2V1h1.2v1.2h1.2V1H15v3l-1 1v5l1 1v2H9v-2l1-1V5L9 4z" fill="#7b5fc7"/>
<circle cx="4.5" cy="6" r="2.2" fill="#8a8a8a"/>
<path d="M2.8 9h3.4l.8 3.5H2z" fill="#777"/>
<rect x="0.5" y="12.5" width="8" height="3" rx="1" fill="#666"/>
</svg>
<!-- M365 -->
<svg class="a" style="left:1255.5px;top:198px" width="14.5" height="15.5" viewBox="0 0 15 16">
<defs><linearGradient id="m365" x1="0" y1="0" x2="1" y2="1"><stop offset="0" stop-color="#2f8ff0"/><stop offset="0.5" stop-color="#6a5ae0"/><stop offset="1" stop-color="#c06ae0"/></linearGradient></defs>
<path d="M7.5 0.8L13.6 4.3V11.7L7.5 15.2 1.4 11.7V4.3z" fill="url(#m365)"/>
<path d="M7.5 0.8L13.6 4.3V8L10 6z" fill="#3b9ef2"/>
<path d="M7.5 5.6L9.6 6.8V9.2L7.5 10.4 5.4 9.2V6.8z" fill="#f0e2e2"/>
</svg>
<!-- outlook -->
<svg class="a" style="left:1255.5px;top:232px" width="14" height="14" viewBox="0 0 14 14">
<rect x="4" y="1" width="10" height="12" rx="1" fill="#1a66c9"/>
<rect x="7" y="1" width="7" height="6" fill="#28a8ea"/>
<rect x="0" y="3" width="8" height="8" rx="1" fill="#0f5cbd"/>
<ellipse cx="4" cy="7" rx="2" ry="2.4" fill="none" stroke="#fff" stroke-width="1.2"/>
</svg>
<!-- send -->
<svg class="a" style="left:1255px;top:267.5px" width="15" height="11" viewBox="0 0 15 11">
<path d="M0 4.5L15 0 10.5 11 7 7.5z" fill="#1d8fe1"/>
<path d="M7 7.5L15 0 8 10z" fill="#0b63b0"/>
</svg>
<div class="a" style="left:1250.5px;top:299.5px;width:23.5px;height:1px;background:#cfc3c3"></div>
<svg class="a" style="left:1254px;top:319px" width="16" height="16" viewBox="0 0 24 24" fill="#333"><path d="M19 12.8h-6.2V19h-1.6v-6.2H5v-1.6h6.2V5h1.6v6.2H19z"/></svg>
<div class="a" style="left:1250px;top:641.5px;width:23.5px;height:1px;background:#cfc3c3"></div>
<svg class="a" style="left:1253px;top:651.5px" width="18" height="18" viewBox="0 0 24 24" fill="#333"><path d="M19.43 12.98c.04-.32.07-.64.07-.98 0-.34-.03-.66-.07-.98l2.11-1.65c.19-.15.24-.42.12-.64l-2-3.46c-.09-.16-.26-.25-.44-.25-.06 0-.12.01-.17.03l-2.49 1c-.52-.4-1.08-.73-1.69-.98l-.38-2.65C14.46 2.18 14.25 2 14 2h-4c-.25 0-.46.18-.49.42l-.38 2.65c-.61.25-1.17.59-1.69.98l-2.49-1c-.06-.02-.12-.03-.18-.03-.17 0-.34.09-.43.25l-2 3.46c-.13.22-.07.49.12.64l2.11 1.65c-.04.32-.07.65-.07.98 0 .33.03.66.07.98l-2.11 1.65c-.19.15-.24.42-.12.64l2 3.46c.09.16.26.25.44.25.06 0 .12-.01.17-.03l2.49-1c.52.4 1.08.73 1.69.98l.38 2.65c.03.24.24.42.49.42h4c.25 0 .46-.18.49-.42l.38-2.65c.61-.25 1.17-.59 1.690-.98l2.49 1c.06.02.12.03.18.03.17 0 .34-.09.43-.25l2-3.46c.12-.22.07-.49-.12-.64l-2.11-1.65zm-1.98-1.71c.04.31.05.52.05.73 0 .21-.02.43-.05.73l-.14 1.13.89.7 1.08.84-.7 1.21-1.27-.51-1.04-.42-.9.68c-.43.32-.84.56-1.25.73l-1.06.43-.16 1.13-.2 1.35h-1.4l-.19-1.35-.16-1.13-1.06-.43c-.43-.18-.83-.41-1.23-.71l-.91-.7-1.06.43-1.27.51-.7-1.21 1.08-.84.89-.7-.14-1.13c-.03-.31-.05-.54-.05-.74s.02-.43.05-.73l.14-1.13-.89-.7-1.08-.84.7-1.21 1.27.51 1.04.42.9-.68c.43-.32.84-.56 1.25-.73l1.06-.43.16-1.13.2-1.35h1.39l.19 1.35.16 1.13 1.06.43c.43.18.83.41 1.23.71l.91.7 1.06-.43 1.27-.51.7 1.21-1.07.85-.89.7.14 1.13zM12 8c-2.21 0-4 1.79-4 4s1.79 4 4 4 4-1.79 4-4-1.79-4-4-4zm0 6c-1.1 0-2-.9-2-2s.9-2 2-2 2 .9 2 2-.9 2-2 2z"/></svg>

<!-- taskbar -->
<div id="tb" class="a" style="left:0;top:679px;width:1280px;height:40px;border-top:1px solid #4a5046;background:linear-gradient(90deg,#1f2a15 0px,#1f2914 160px,#20241f 265px,#1b2b14 440px,#1c2914 590px,#21231f 640px,#1e2a16 740px,#1b2c14 975px,#1c2a16 1100px,#1e251e 1160px,#1f2a17 1280px)">
</div>
<!-- ===== TASKBAR CONTENT ===== -->
<!-- weather -->
<svg class="a" style="left:4px;top:685px" width="23" height="24" viewBox="0 0 23 24">
<defs><linearGradient id="mn" x1="1" y1="0" x2="0" y2="1"><stop offset="0" stop-color="#f9cf2e"/><stop offset="1" stop-color="#ef8a1c"/></linearGradient>
<mask id="mm"><rect width="23" height="24" fill="#fff"/><circle cx="12.6" cy="4.2" r="6.6" fill="#000"/></mask>
<linearGradient id="cl" x1="0" y1="0" x2="0" y2="1"><stop offset="0" stop-color="#a9c6f7"/><stop offset="1" stop-color="#8db0f0"/></linearGradient></defs>
<circle cx="9" cy="8.6" r="7" fill="url(#mn)" mask="url(#mm)"/>
<path d="M5.2 23.2a4.2 4.2 0 0 1-.6-8.4 5.6 5.6 0 0 1 10.8-1.2 4.6 4.6 0 0 1 5.9 4.4 4.6 4.6 0 0 1-4.1 5.2z" fill="url(#cl)"/>
</svg>
<div class="a" style="left:15px;top:684.7px;width:13px;height:13px;border-radius:50%;background:#f5a0ae"></div>
<div class="t" style="left:15px;width:13px;text-align:center;top:686.5px;font-size:9.5px;color:#4a2028">1</div>
<div class="t" style="left:31.3px;top:688px;font-size:10px;letter-spacing:-0.2px;color:#f2f2f2">63°F</div>
<div class="t" style="left:30.6px;top:701.5px;font-size:10.4px;color:#d8d8d8">Mostly cloudy</div>
<!-- windows logo -->
<svg class="a" style="left:298.5px;top:690px" width="20" height="20" viewBox="0 0 20 20">
<defs><linearGradient id="wg" x1="0" y1="0" x2="1" y2="1"><stop offset="0" stop-color="#6ee0fb"/><stop offset="1" stop-color="#1c9de8"/></linearGradient></defs>
<path d="M0 1.5A1.5 1.5 0 0 1 1.5 0h8v9.5H0zM10.5 0h8A1.5 1.5 0 0 1 20 1.5v8h-9.5zM0 10.5h9.5V20h-8A1.5 1.5 0 0 1 0 18.5zM10.5 10.5H20v8a1.5 1.5 0 0 1-1.5 1.5h-8z" fill="url(#wg)"/>
</svg>
<!-- search pill -->
<div class="a" style="left:330px;top:686px;width:184.5px;height:27px;border-radius:14px;background:#3a4734;border:1px solid #4a5643"></div>
<svg class="a" style="left:339px;top:693px" width="14" height="14" viewBox="0 0 14 14"><circle cx="5.8" cy="5.8" r="4.8" stroke="#e8e8e8" stroke-width="1.4" fill="none"/><path d="M9.3 9.3l4 4" stroke="#e8e8e8" stroke-width="1.5"/></svg>
<div class="t" style="left:359.5px;top:694.5px;font-size:11.4px;color:#e6e6e6">Search</div>
<!-- doodle -->
<svg class="a" style="left:473px;top:689px" width="35" height="22" viewBox="0 0 35 22">
<circle cx="5" cy="14" r="4" fill="#e8952a" stroke="#c35a1d" stroke-width="1" stroke-dasharray="1 1"/>
<path d="M8 5c3-3 8-3 10-2s3 0 4 2c1 2 1 4-1 6s-1 4-2 6-3 4-5 2-1-4-3-5-4-2-4-4 0-3 1-5z" fill="#4caf2e"/>
<circle cx="30" cy="4.5" r="3.5" fill="#9b6fd0" stroke="#6a4aa0" stroke-width="1" stroke-dasharray="1 1"/>
<circle cx="30" cy="15" r="3.5" fill="#c8a033" stroke="#8b6b1d" stroke-width="1" stroke-dasharray="1 1"/>
<circle cx="24" cy="12" r="1" fill="#3da55d"/>
</svg>
<!-- task view -->
<svg class="a" style="left:525px;top:690px" width="20" height="19" viewBox="0 0 20 19">
<defs><linearGradient id="tv" x1="0" y1="0" x2="1" y2="1"><stop offset="0" stop-color="#8a8a8a"/><stop offset="1" stop-color="#5a5a5a"/></linearGradient></defs>
<rect x="0" y="5" width="15" height="13.5" rx="1" fill="url(#tv)"/>
<rect x="5" y="0" width="15" height="13.5" rx="1" fill="#e6e6e6"/>
<rect x="5" y="5" width="10" height="8.5" fill="#b8b8b8"/>
</svg>
<!-- teams (chat) -->
<svg class="a" style="left:562px;top:684px" width="26" height="27" viewBox="0 0 26 27">
<circle cx="15.5" cy="11" r="3" fill="#7b83eb"/>
<rect x="10.5" y="10" width="10" height="12.5" rx="4" fill="#7b83eb"/>
<rect x="16" y="11" width="5" height="9" rx="2" fill="#5059c9"/>
<rect x="1" y="10" width="10" height="9.5" rx="0.5" fill="#fff"/>
<text x="6" y="17.8" font-size="7.5" font-weight="bold" text-anchor="middle" fill="#5b5fc7" font-family="Liberation Sans">T</text>
<circle cx="19.5" cy="7.4" r="6.6" fill="#4cc2f5"/>
<text x="19.5" y="11.4" font-size="10" text-anchor="middle" fill="#163553" font-family="Liberation Sans">2</text>
</svg>
<!-- explorer -->
<svg class="a" style="left:599px;top:690.5px" width="20" height="18" viewBox="0 0 20 18">
<path d="M0 2a2 2 0 0 1 2-2h5l2 2h9a2 2 0 0 1 2 2v12a2 2 0 0 1-2 2H2a2 2 0 0 1-2-2z" fill="#e3a21a"/>
<rect x="0" y="5" width="20" height="13" rx="1.5" fill="#ffc83d"/>
<rect x="4" y="13" width="12" height="3" rx="1" fill="#1f7ad6"/>
</svg>
<!-- edge -->
<svg class="a" style="left:635.5px;top:689px" width="21" height="21" viewBox="0 0 21 21">
<circle cx="10.5" cy="10.5" r="10" fill="#1a8ad4"/>
<path d="M1 9C2 3 7 .5 11 .5c5 0 9.5 3.5 9.5 8.5 0 3-2.5 4.5-5 4.5-2 0-3-1-3-2 0-2 2-2 2-4S12 4 9.5 4C5 4 2 7 1 9z" fill="#52c36a"/>
<path d="M1 9c2-2.5 5-3.3 7-3 4 .5 3 4 3 6 0 3 3 5 6 5-2 2.5-4.5 3.5-7 3.5C4 20.5 .5 15 1 9z" fill="#0c59a4"/>
<path d="M11 12c0 3 3 5 6 5 1.5 0 3.5-1 3.5-3-1 1-2.5 1.5-4 1.5-3 0-5.5-1.5-5.5-3.5z" fill="#2fb8e8"/>
</svg>
<!-- store -->
<svg class="a" style="left:672.5px;top:688px" width="20.5" height="21" viewBox="0 0 20 21">
<path d="M6 4V3a4 4 0 0 1 8 0v1" stroke="#29a8e8" stroke-width="1.6" fill="none"/>
<rect x="0" y="4" width="20" height="17" rx="2" fill="#f3f3f3"/>
<rect x="6" y="8.5" width="3.5" height="3.5" fill="#f25022"/>
<rect x="10.5" y="8.5" width="3.5" height="3.5" fill="#7fba00"/>
<rect x="6" y="13" width="3.5" height="3.5" fill="#00a4ef"/>
<rect x="10.5" y="13" width="3.5" height="3.5" fill="#ffb900"/>
</svg>
<!-- help -->
<svg class="a" style="left:709.5px;top:684.5px" width="25" height="26" viewBox="0 0 25 26">
<circle cx="10.5" cy="15.5" r="10" fill="#1d8ae0"/>
<circle cx="10.5" cy="15.5" r="8.3" fill="none" stroke="#fff" stroke-width="1.4"/>
<text x="10.5" y="20" font-size="12" font-weight="bold" text-anchor="middle" fill="#fff" font-family="Liberation Sans">?</text>
<circle cx="18" cy="6.8" r="6.6" fill="#f5c01a"/>
</svg>
<!-- myhp -->
<div class="a" style="left:747px;top:689px;width:20.5px;height:20.5px;background:#1ba0dc"></div>
<div class="t" style="left:747px;width:20.5px;text-align:center;top:695.5px;font-size:7px;font-style:italic;color:#fff;letter-spacing:-0.3px">myhp</div>
<!-- teams -->
<svg class="a" style="left:783px;top:689px" width="21" height="20" viewBox="0 0 21 20">
<circle cx="17" cy="4.2" r="2.6" fill="#7b83eb"/>
<rect x="14" y="7.5" width="7" height="9" rx="3" fill="#5059c9"/>
<circle cx="11" cy="3.5" r="3.3" fill="#7b83eb"/>
<rect x="6" y="7.5" width="11" height="12" rx="4" fill="#7b83eb"/>
<rect x="0" y="5.5" width="11" height="11" rx="1.3" fill="#4b53bc"/>
<text x="5.5" y="14.3" font-size="9" font-weight="bold" text-anchor="middle" fill="#fff" font-family="Liberation Sans">T</text>
</svg>
<!-- settings gear -->
<svg class="a" style="left:819.5px;top:688px" width="22.5" height="22.5" viewBox="2 2 20 20">
<path d="M19.14 12.94c.04-.3.06-.61.06-.94 0-.32-.02-.64-.07-.94l2.03-1.58c.18-.14.23-.41.12-.61l-1.92-3.32c-.12-.22-.37-.29-.59-.22l-2.39.96c-.5-.38-1.03-.7-1.62-.94l-.36-2.54c-.04-.24-.24-.41-.48-.41h-3.84c-.24 0-.43.17-.47.41l-.36 2.54c-.59.24-1.130.57-1.62.94l-2.39-.96c-.22-.08-.47 0-.59.22L2.74 8.87c-.12.21-.08.47.12.61l2.03 1.58c-.05.3-.09.63-.09.94s.02.64.07.94l-2.03 1.58c-.18.14-.23.41-.12.61l1.92 3.32c.12.22.37.29.59.22l2.39-.96c.5.38 1.03.7 1.62.94l.36 2.54c.05.24.24.41.48.41h3.84c.24 0 .44-.17.47-.41l.36-2.54c.59-.24 1.13-.56 1.62-.94l2.39.96c.22.08.47 0 .59-.22l1.92-3.32c.12-.22.07-.47-.12-.61l-2.01-1.58z" fill="#8a8f94"/>
<circle cx="12" cy="12" r="4.3" fill="#dfe6ee"/>
<circle cx="12" cy="12" r="3.4" fill="#1f6fd0"/>
</svg>
<!-- teams new -->
<div class="a" style="left:851px;top:682.5px;width:34px;height:35px;background:#3a2626;border-radius:4px"></div>
<svg class="a" style="left:858px;top:689px" width="21" height="22" viewBox="0 0 21 22">
<circle cx="17" cy="4.2" r="2.6" fill="#7b83eb"/>
<rect x="14" y="7.5" width="7" height="9" rx="3" fill="#5059c9"/>
<circle cx="11" cy="3.5" r="3.3" fill="#7b83eb"/>
<rect x="6" y="7.5" width="11" height="10" rx="4" fill="#7b83eb"/>
<rect x="0" y="5.5" width="11" height="11" rx="1.3" fill="#4b53bc"/>
<text x="5.5" y="14.3" font-size="9" font-weight="bold" text-anchor="middle" fill="#fff" font-family="Liberation Sans">T</text>
<rect x="6" y="15" width="15" height="6.5" rx="1" fill="#1fc2c2"/>
<text x="13.5" y="20.3" font-size="5.5" font-weight="bold" text-anchor="middle" fill="#1d2a3a" font-family="Liberation Sans">NEW</text>
</svg>
<div class="a" style="left:864.5px;top:713.5px;width:6.5px;height:2.5px;border-radius:2px;background:#f4a2a8"></div>
<!-- snipping -->
<svg class="a" style="left:894px;top:689px" width="21.5" height="21" viewBox="0 0 21 21">
<rect x="0" y="0" width="14" height="14" rx="1.5" fill="#f0f0f0"/>
<rect x="2" y="2" width="10" height="10" fill="none" stroke="#e04848" stroke-width="1.4" stroke-dasharray="1.6 1.2"/>
<circle cx="17.5" cy="11" r="2.2" fill="none" stroke="#29a8e8" stroke-width="1.3"/>
<circle cx="14" cy="18" r="2.2" fill="none" stroke="#29a8e8" stroke-width="1.3"/>
<path d="M9 9l7 7M14 8l-3 8" stroke="#aaa" stroke-width="1.2"/>
</svg>
<!-- photos -->
<svg class="a" style="left:932.5px;top:689.5px" width="19" height="19" viewBox="0 0 19 19">
<rect x="0" y="0" width="19" height="19" rx="3" fill="#2f8de4"/>
<path d="M0 14l6-7 5 5 3-2 5 4v2a3 3 0 0 1-3 3H3a3 3 0 0 1-3-3z" fill="#7fd3f7"/>
<circle cx="14" cy="4.5" r="2" fill="#fff"/>
</svg>
<!-- indicators -->
<div class="a" style="left:606px;top:713.5px;width:6px;height:2.5px;border-radius:2px;background:#9a9a9a"></div>
<div class="a" style="left:643px;top:713.5px;width:6px;height:2.5px;border-radius:2px;background:#9a9a9a"></div>
<div class="a" style="left:790.5px;top:713.5px;width:6px;height:2.5px;border-radius:2px;background:#9a9a9a"></div>
<div class="a" style="left:827.5px;top:713.5px;width:6px;height:2.5px;border-radius:2px;background:#9a9a9a"></div>
<div class="a" style="left:902px;top:713.5px;width:6px;height:2.5px;border-radius:2px;background:#9a9a9a"></div>
<div class="a" style="left:939px;top:713.5px;width:6px;height:2.5px;border-radius:2px;background:#9a9a9a"></div>
<!-- tray -->
<svg class="a" style="left:1017px;top:696.5px" width="10.5" height="6.5" viewBox="0 0 10 6"><path d="M.7 5.3L5 1l4.3 4.3" stroke="#eee" stroke-width="1.3" fill="none"/></svg>
<svg class="a" style="left:1042px;top:694.5px" width="14.5" height="10" viewBox="0 0 15 10"><path d="M3.5 10a3.2 3.2 0 0 1-.3-6.4A4.3 4.3 0 0 1 11 3a3.5 3.5 0 0 1 .8 7z" fill="#e2e2e2"/></svg>
<svg class="a" style="left:1069px;top:692.5px" width="14.5" height="14" viewBox="0 0 15 14">
<path d="M2 6.5A5.5 5.5 0 0 1 12 3.5M12.5 0.5v3.3H9.2M12.8 7.5A5.5 5.5 0 0 1 3 10.5M2.5 13.5v-3.3h3.3" stroke="#e8e8e8" stroke-width="1.2" fill="none"/>
<circle cx="11" cy="10.5" r="3.3" fill="#f7911e"/>
</svg>
<svg class="a" style="left:1096px;top:693px" width="14.5" height="12" viewBox="0 0 15 12">
<path d="M1 4.5a9 9 0 0 1 13 0M3 6.7a6 6 0 0 1 9 0M5 8.9a3 3 0 0 1 5 0" stroke="#eee" stroke-width="1.3" fill="none"/><circle cx="7.5" cy="11" r="1" fill="#eee"/>
</svg>
<svg class="a" style="left:1116px;top:693px" width="14.5" height="12" viewBox="0 0 15 12">
<path d="M1 4h2.5L7 1v10L3.5 8H1z" stroke="#eee" stroke-width="1.1" fill="none"/>
<path d="M9 4a2.5 2.5 0 0 1 0 4M10.5 2.3a5 5 0 0 1 0 7.4M12.2 .8a7.3 7.3 0 0 1 0 10.4" stroke="#eee" stroke-width="1.1" fill="none"/>
</svg>
<svg class="a" style="left:1136px;top:694px" width="14.5" height="10" viewBox="0 0 15 10">
<rect x=".6" y=".6" width="12" height="8.8" rx="1.8" stroke="#eee" stroke-width="1.1" fill="none"/>
<rect x="2.3" y="2.3" width="5" height="5.4" rx=".6" fill="#eee"/><rect x="13.3" y="3.3" width="1.4" height="3.4" fill="#eee"/>
</svg>
<div class="t" style="left:1150px;width:60px;text-align:right;top:687.7px;font-size:10.3px;letter-spacing:-0.3px;color:#f2f2f2">10:08 PM</div>
<div class="t" style="left:1150px;width:60.5px;text-align:right;top:701.5px;font-size:10.4px;color:#f2f2f2">5/25/2024</div>
<svg class="a" style="left:1218px;top:693px" width="11.5" height="13" viewBox="0 0 12 13"><path d="M6 .8a3.8 3.8 0 0 0-3.8 3.8v3.2L.8 10h10.4L9.8 7.8V4.6A3.8 3.8 0 0 0 6 .8zM4.3 11a1.7 1.7 0 0 0 3.4 0" stroke="#eee" stroke-width="1.1" fill="none"/></svg>
<!-- copilot -->
<svg class="a" style="left:1243.5px;top:690px" width="20.5" height="20" viewBox="0 0 20 20">
<defs>
<linearGradient id="cpl" x1="0.7" y1="0" x2="0.2" y2="1"><stop offset="0" stop-color="#1c9ff5"/><stop offset="0.5" stop-color="#62c36a"/><stop offset="1" stop-color="#e9d62a"/></linearGradient>
<linearGradient id="cpr" x1="0" y1="1" x2="1" y2="0"><stop offset="0" stop-color="#f0509a"/><stop offset="1" stop-color="#a65cf2"/></linearGradient>
</defs>
<path d="M0.8 12.5L4.6 3.2C5.2 1.8 6 1 7.5 1H11.5C13 1 13.4 2 12.9 3.3L9.3 12.6C8.8 13.9 8 14.6 6.5 14.6H2.3C0.9 14.6 0.3 13.8 0.8 12.5z" fill="url(#cpl)"/>
<path d="M10.5 1H12.5C13.7 1 14.3 2.2 14.8 5.2L12.5 9.5 9.8 5.5z" fill="#2447d8"/>
<path d="M9.8 6.2C10.2 5.2 10.9 5 12 5H17C18.6 5 19.4 5.8 18.9 7.4L17 12.6C16.5 14 15.7 14.6 14.3 14.6H8.8C7.8 14.6 7.5 14 7.8 13z" fill="url(#cpr)"/>
<rect x="5" y="13.5" width="14" height="6" rx="1.5" fill="#f4c20d"/>
<text x="12" y="18.6" font-size="5.2" font-weight="bold" text-anchor="middle" fill="#2a2000" font-family="Liberation Sans">PRE</text>
</svg>

</body></html>
